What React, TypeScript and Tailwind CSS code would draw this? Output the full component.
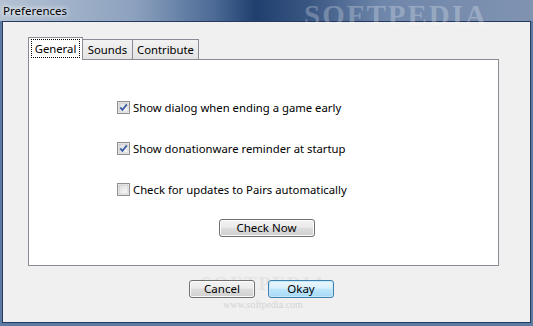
import React from "react";

const font = { fontFamily: '"Noto Sans", "Open Sans", sans-serif' };

function CheckBox({ checked }: { checked: boolean }) {
  return (
    <svg width="13" height="13" viewBox="0 0 13 13" className="shrink-0">
      <defs>
        <linearGradient id="cbg" x1="0" y1="0" x2="1" y2="1">
          <stop offset="0" stopColor="#dcdcdc" />
          <stop offset="1" stopColor="#fbfbfb" />
        </linearGradient>
      </defs>
      <rect x="0.5" y="0.5" width="12" height="12" fill="#f4f4f4" stroke="#8f8f8f" />
      <rect x="2" y="2" width="9" height="9" fill="url(#cbg)" stroke="#b8b8b8" strokeWidth="0.6" />
      {checked && <path d="M3.3 6.4 L5.4 9 L9.8 3.4" fill="none" stroke="#3a5ca5" strokeWidth="1.8" strokeLinejoin="round" />}
    </svg>
  );
}

function Option({ checked, label }: { checked: boolean; label: string }) {
  return (
    <label className="flex h-[13px] items-center gap-[3px] text-[11.3px] text-black">
      <CheckBox checked={checked} />
      <span className="leading-none">{label}</span>
    </label>
  );
}

function Button({ children, focused, className }: { children: React.ReactNode; focused?: boolean; className: string }) {
  return (
    <button
      type="button"
      className={
        "flex h-[18px] items-center justify-center rounded-[3px] border text-[11.5px] leading-none text-black " +
        (focused
          ? "border-[#3c7fb1] bg-[linear-gradient(#eaf6fd_0%,#d9f0fc_45%,#bee6fd_50%,#a7d9f5_100%)] shadow-[inset_0_0_0_1px_#c9e9f8]"
          : "border-[#707070] bg-[linear-gradient(#f2f2f2_0%,#ebebeb_45%,#dddddd_50%,#cfcfcf_100%)] shadow-[inset_0_0_0_1px_#fbfbfb]") +
        " " +
        className
      }
    >
      {children}
    </button>
  );
}

export default function App() {
  return (
    <div className="relative flex h-[326px] w-[533px] flex-col overflow-hidden bg-[#5d7aa3]" style={font}>
      <div className="relative flex h-[21px] items-center bg-[linear-gradient(90deg,#b4c2d3_0%,#8da2bf_25%,#4d6b96_40%,#213f6e_48%,#3a5783_58%,#6f87ab_72%,#8093b1_100%)] pl-[3px] text-[11.5px] text-black">
        <span className="relative z-10 [text-shadow:0_0_6px_#ffffff,0_0_4px_#ffffff]">Preferences</span>
        <span className="absolute left-[304px] top-[-6px] font-['Liberation_Serif'] text-[29px] font-bold tracking-[2px] text-white/25">
          SOFTPEDIA
        </span>
      </div>
      <div className="mx-[2px] mb-[3px] flex flex-1 flex-col border border-[#253a5c] bg-[#f0f0f0]">
        <div className="ml-[25px] mt-[15px] flex items-end">
          <div className="relative z-10 -mb-px flex h-[23px] w-[55px] items-start justify-center border border-b-0 border-[#898c95] bg-white px-[2px] pt-[1px]">
            <span className="flex h-[19px] w-full items-center justify-center border border-dotted border-black text-[11.3px] leading-none">
              General
            </span>
          </div>
          <div className="flex h-[20px] w-[50px] items-center justify-center border border-l-0 border-b-0 border-[#898c95] bg-[linear-gradient(#f2f2f2,#e3e3e3)] text-[11.3px] leading-none">
            Sounds
          </div>
          <div className="flex h-[20px] w-[66px] items-center justify-center border border-l-0 border-b-0 border-[#898c95] bg-[linear-gradient(#f2f2f2,#e3e3e3)] text-[11.3px] leading-none">
            Contribute
          </div>
        </div>
        <div className="ml-[25px] flex h-[207px] w-[471px] flex-col border border-[#898c95] bg-white">
          <div className="flex flex-col gap-[28px] pl-[88px] pt-[41px]">
            <Option checked label="Show dialog when ending a game early" />
            <Option checked label="Show donationware reminder at startup" />
            <Option checked={false} label="Check for updates to Pairs automatically" />
          </div>
          <div className="mt-[23px] flex justify-center pl-[6px]">
            <Button className="w-[96px]">Check Now</Button>
          </div>
        </div>
        <div className="relative mt-[14px] flex justify-center gap-[13px] pr-[10px]">
          <span className="pointer-events-none absolute left-[198px] top-[-10px] font-['Liberation_Serif'] text-[19px] font-bold tracking-[2px] text-[#e4e4e4]">
            SOFTPEDIA
          </span>
          <span className="pointer-events-none absolute left-[220px] top-[17px] font-['Liberation_Serif'] text-[10px] text-[#d4d4d4]">
            www.softpedia.com
          </span>
          <Button className="relative w-[66px]">Cancel</Button>
          <Button focused className="relative w-[66px]">Okay</Button>
        </div>
      </div>
    </div>
  );
}
